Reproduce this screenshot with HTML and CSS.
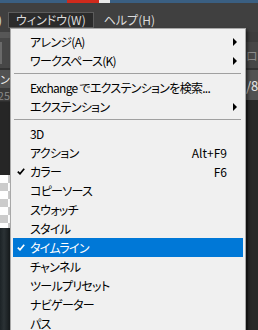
FILE: index.html
```html
<!DOCTYPE html>
<html lang="ja">
<head>
    <meta charset="UTF-8">
    <meta name="viewport" content="width=device-width, initial-scale=1.0">
    <title>ウィンドウ メニュー</title>
    <link rel="stylesheet" href="styles.css">
</head>
<body>
    <div class="app">
        <div class="titlebar">
            <span class="tb-blue"></span>
            <span class="tb-red"></span>
            <span class="tb-white"></span>
        </div>

        <div class="menubar">
            <span class="mb-item mb-cut">)</span>
            <span class="mb-item active">ウィンドウ(W)</span>
            <span class="mb-item">ヘルプ(H)</span>
        </div>

        <div class="workspace">
            <div class="side left">
                <div class="band b-top"></div>
                <div class="band b-tool"><span class="tick"></span></div>
                <div class="band b-tab"><span class="clip-right">ョン</span></div>
                <div class="band b-info"><span class="clip-right dim">25</span></div>
                <div class="band b-dark"></div>
                <div class="band b-checker"></div>
                <div class="band b-photo"></div>
            </div>
            <div class="middle"></div>
            <div class="side right">
                <div class="band b-top"></div>
                <div class="band b-tool"><span class="faint">ロ千</span></div>
                <div class="band b-tab"><span class="light">/8</span></div>
                <div class="band b-dark2"></div>
            </div>
        </div>

        <div class="menu">
            <div class="item has-sub">
                <span class="check"></span><span class="label">アレンジ(A)</span><span class="key"></span><span class="arrow"></span>
            </div>
            <div class="item has-sub">
                <span class="check"></span><span class="label">ワークスペース(K)</span><span class="key"></span><span class="arrow"></span>
            </div>
            <div class="sep"></div>
            <div class="item">
                <span class="check"></span><span class="label">Exchange でエクステンションを検索...</span><span class="key"></span><span class="arrow"></span>
            </div>
            <div class="item has-sub">
                <span class="check"></span><span class="label">エクステンション</span><span class="key"></span><span class="arrow"></span>
            </div>
            <div class="sep"></div>
            <div class="item">
                <span class="check"></span><span class="label">3D</span><span class="key"></span><span class="arrow"></span>
            </div>
            <div class="item">
                <span class="check"></span><span class="label">アクション</span><span class="key">Alt+F9</span><span class="arrow"></span>
            </div>
            <div class="item checked">
                <span class="check"><svg width="8" height="7" viewBox="0 0 8 7"><path d="M0.8 3.6 L3 5.8 L7.2 0.8" fill="none" stroke="currentColor" stroke-width="1.7"/></svg></span><span class="label">カラー</span><span class="key">F6</span><span class="arrow"></span>
            </div>
            <div class="item">
                <span class="check"></span><span class="label">コピーソース</span><span class="key"></span><span class="arrow"></span>
            </div>
            <div class="item">
                <span class="check"></span><span class="label">スウォッチ</span><span class="key"></span><span class="arrow"></span>
            </div>
            <div class="item">
                <span class="check"></span><span class="label">スタイル</span><span class="key"></span><span class="arrow"></span>
            </div>
            <div class="item checked selected">
                <span class="check"><svg width="8" height="7" viewBox="0 0 8 7"><path d="M0.8 3.6 L3 5.8 L7.2 0.8" fill="none" stroke="currentColor" stroke-width="1.7"/></svg></span><span class="label">タイムライン</span><span class="key"></span><span class="arrow"></span>
            </div>
            <div class="item">
                <span class="check"></span><span class="label">チャンネル</span><span class="key"></span><span class="arrow"></span>
            </div>
            <div class="item">
                <span class="check"></span><span class="label">ツールプリセット</span><span class="key"></span><span class="arrow"></span>
            </div>
            <div class="item">
                <span class="check"></span><span class="label">ナビゲーター</span><span class="key"></span><span class="arrow"></span>
            </div>
            <div class="item">
                <span class="check"></span><span class="label">パス</span><span class="key"></span><span class="arrow"></span>
            </div>
        </div>
    </div>
</body>
</html>
```

FILE: styles.css
```css
:root {
    --bar-color: #404040;
    --menu-bg: #f0f0f0;
    --menu-border: #a8a8a8;
    --select-color: #0078d7;
    --text-color: #000000;
    --bar-text: #dcdcdc;
}
* {
    box-sizing: border-box;
    margin: 0;
    padding: 0;
}
body {
    width: 258px;
    height: 330px;
    overflow: hidden;
    background: #262626;
    font-family: 'Noto Sans CJK JP', 'Noto Sans', sans-serif;
    font-size: 12px;
    font-feature-settings: "palt";
}
.app {
    position: relative;
    width: 258px;
    height: 330px;
    overflow: hidden;
}

/* title strip */
.titlebar {
    display: flex;
    height: 3px;
    background: #3a5f82;
}
.tb-blue {
    width: 67px;
}
.tb-red {
    width: 32px;
    background: #d02a1c;
}
.tb-white {
    width: 11px;
    background: #e8e8e8;
}

/* menu bar */
.menubar {
    display: flex;
    align-items: flex-start;
    height: 29px;
    padding-top: 9px;
    background: var(--bar-color);
    color: var(--bar-text);
}
.mb-item {
    height: 16px;
    line-height: 14px;
    padding: 0 7px;
    border: 1px solid transparent;
    white-space: nowrap;
}
.mb-cut {
    width: 8px;
    padding: 0;
    margin-left: -3px;
}
.mb-item.active {
    margin: 0 2px 0 3px;
    background: #2b2b2b;
    border-color: #5c5c5c;
}

/* workspace behind the menu */
.workspace {
    display: grid;
    grid-template-columns: 10px 236px 12px;
    height: 298px;
}
.side {
    display: flex;
    flex-direction: column;
    overflow: hidden;
}
.band {
    display: flex;
    align-items: center;
    overflow: hidden;
    white-space: nowrap;
    font-size: 11px;
}
.b-top {
    height: 6px;
    background: #575757;
}
.right .b-top {
    height: 10px;
    background: #3d3d3d;
}
.b-tool {
    height: 32px;
    background: #474747;
    border-bottom: 2px solid #333333;
}
.right .b-tool {
    height: 28px;
}
.tick {
    width: 2px;
    height: 22px;
    background: #6a6a6a;
}
.b-tab {
    height: 18px;
    background: #525252;
    color: #f0f0f0;
}
.right .b-tab {
    height: 30px;
    font-size: 13px;
}
.b-info {
    height: 14px;
    background: #3a3a3a;
    border-bottom: 1px solid #2e2e2e;
}
.clip-right {
    display: flex;
    justify-content: flex-end;
    width: 10px;
}
.dim {
    color: #8a8a8a;
}
.faint {
    color: #8c8c8c;
    font-size: 12px;
}
.light {
    color: #e6e6e6;
}
.b-dark {
    height: 73px;
    background: #262626;
}
.b-checker {
    height: 53px;
    background-color: #ffffff;
    background-image:
        linear-gradient(45deg, #cccccc 25%, transparent 25%, transparent 75%, #cccccc 75%),
        linear-gradient(45deg, #cccccc 25%, transparent 25%, transparent 75%, #cccccc 75%);
    background-size: 16px 16px;
    background-position: 0 0, 8px 8px;
}
.b-photo {
    flex: 1;
    background: linear-gradient(90deg, #1c2326, #2b3235 40%, #151a1c);
}
.b-dark2 {
    flex: 1;
    background: #282828;
    border-left: 2px solid #1e1e1e;
}

/* dropdown menu */
.menu {
    position: absolute;
    left: 10px;
    top: 28px;
    width: 236px;
    height: 310px;
    padding: 3px 2px;
    background: var(--menu-bg);
    border: 1px solid var(--menu-border);
    box-shadow: 2px 2px 3px rgba(0, 0, 0, 0.5);
    color: var(--text-color);
}
.item {
    display: grid;
    grid-template-columns: 17px 1fr auto 16px;
    align-items: center;
    height: 19px;
    line-height: 19px;
    white-space: nowrap;
}
.label {
    letter-spacing: -0.7px;
}
.item.selected {
    background: var(--select-color);
    color: #ffffff;
}
.check {
    display: flex;
    align-items: center;
    padding-left: 4px;
    height: 19px;
}
.key {
    text-align: right;
}
.arrow {
    display: flex;
    justify-content: center;
}
.has-sub .arrow::before {
    content: "";
    border-left: 4px solid #000000;
    border-top: 4px solid transparent;
    border-bottom: 4px solid transparent;
}
.sep {
    height: 1px;
    margin: 3px 2px 4px 1px;
    background: #a0a0a0;
}
```
